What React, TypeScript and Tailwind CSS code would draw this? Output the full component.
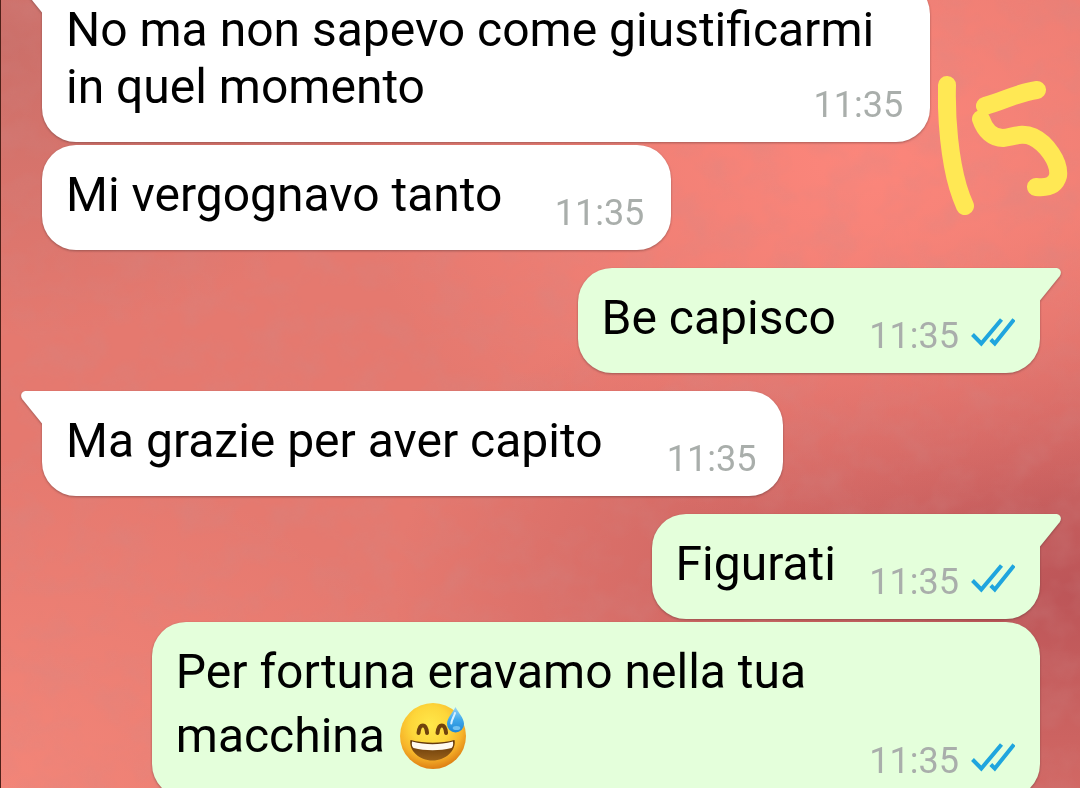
import type { ReactNode } from "react";

type Message = {
  id: number;
  mine: boolean;
  tail: boolean;
  time: string;
  text: ReactNode;
};

const messages: Message[] = [
  { id: 1, mine: false, tail: true, time: "11:35", text: "No ma non sapevo come giustificarmi in quel momento" },
  { id: 2, mine: false, tail: false, time: "11:35", text: "Mi vergognavo tanto" },
  { id: 3, mine: true, tail: true, time: "11:35", text: "Be capisco" },
  { id: 4, mine: false, tail: true, time: "11:35", text: "Ma grazie per aver capito " },
  { id: 5, mine: true, tail: true, time: "11:35", text: "Figurati" },
  {
    id: 6,
    mine: true,
    tail: false,
    time: "11:35",
    text: (
      <>
        Per fortuna eravamo nella tua macchina <SweatSmile />
      </>
    ),
  },
];

function SweatSmile() {
  return (
    <svg
      role="img"
      aria-label="grinning face with sweat"
      viewBox="0 0 71 71"
      className="inline-block h-[71px] w-[71px] align-[-19px]"
    >
      <defs>
        <radialGradient id="face" cx="0.46" cy="0.34" r="0.66">
          <stop offset="0" stopColor="#ffe84a" />
          <stop offset="0.45" stopColor="#fdd63a" />
          <stop offset="0.75" stopColor="#f7b42a" />
          <stop offset="1" stopColor="#de7f14" />
        </radialGradient>
        <linearGradient id="mouth" x1="0" y1="0" x2="0" y2="1">
          <stop offset="0" stopColor="#5c3208" />
          <stop offset="1" stopColor="#9a6119" />
        </linearGradient>
        <linearGradient id="drop" x1="0" y1="0" x2="0" y2="1">
          <stop offset="0" stopColor="#9bd4f5" />
          <stop offset="0.5" stopColor="#3fa9ea" />
          <stop offset="1" stopColor="#1d86d6" />
        </linearGradient>
      </defs>
      <circle cx="36" cy="36" r="33" fill="url(#face)" />
      <path
        d="M21.500 33c.6-5.500 2.200-7.500 4.300-7.500s3.700 2 4.300 7.500M40.500 33c.6-5.500 2.200-7.500 4.300-7.500s3.700 2 4.300 7.500"
        fill="none"
        stroke="#70430d"
        strokeWidth="4"
        strokeLinecap="round"
      />
      <path d="M13.500 40c14 3.500 31 3.500 44 0 2 10-8.500 20.500-22 20.500s-24-10.500-22-20.500z" fill="url(#mouth)" />
      <path d="M15 41.500c14 3.500 27 3.500 41 0 .6 3.500-.2 5.500-1.500 6.500-12 3-26 3-38 0-1.300-1-2.100-3-1.500-6.500z" fill="#fffaf0" />
      <path d="M58.500 7c3 6 8.500 11 8.500 17a8.500 8.500 0 0 1-17 0c0-6 5.500-11 8.500-17z" fill="url(#drop)" />
      <path d="M58 13c-1 4-3.500 6.500-3.700 10.500" fill="none" stroke="#d9f1ff" strokeWidth="2" strokeLinecap="round" />
      <ellipse cx="59.500" cy="28" rx="3.800" ry="2" fill="#8fd6fa" opacity="0.700" />
    </svg>
  );
}

function ReadTicks() {
  return (
    <svg
      role="img"
      aria-label="read"
      viewBox="0 0 44 36"
      className="h-9 w-11"
      fill="none"
      stroke="#1fa5de"
      strokeWidth="4"
    >
      <path d="M1.500 16.500l8.800 9L30.500 1.500" />
      <path d="M19.800 21.500l4 4L43 1.500" />
    </svg>
  );
}

function Tail({ mine }: { mine: boolean }) {
  return (
    <svg
      aria-hidden="true"
      viewBox="0 0 21 33"
      className={
        mine
          ? "absolute top-0 left-full h-[33px] w-[21px] fill-[#e4ffdb]"
          : "absolute top-0 right-full h-[33px] w-[21px] -scale-x-100 fill-white"
      }
    >
      <path d="M0 0H16c4.500 0 6.300 4.800 3.600 8.200L0 32.500z" />
    </svg>
  );
}

function Bubble({ message }: { message: Message }) {
  const { mine, tail, time, text } = message;
  const side = mine ? "self-end bg-[#e4ffdb] pr-[25px]" : "self-start bg-white pr-[27px]";
  const corner = tail ? (mine ? "rounded-tr-none" : "rounded-tl-none") : "";
  // a tail starts a new group, so it gets the wider gap
  const gap = tail ? "mt-[18px]" : "mt-[3px]";

  return (
    <li
      className={`relative max-w-[89%] rounded-[34px] pt-[21px] pb-4 pl-6 drop-shadow-[0_1px_1px_rgba(90,50,50,0.5)] ${side} ${corner} ${gap}`}
    >
      {tail && <Tail mine={mine} />}
      <p className="text-[48px] leading-[57px] whitespace-pre-wrap text-black">
        {text}
        {/* keeps the last line clear of the time */}
        <span className={mine ? "inline-block w-[179px]" : "inline-block w-[142px]"} />
      </p>
      <div className="-mt-[31px] flex items-center justify-end gap-3 text-[36px] leading-[42px] text-[#a9aeab]">
        <time>{time}</time>
        {mine && <ReadTicks />}
      </div>
    </li>
  );
}

function Wallpaper() {
  return (
    <svg aria-hidden="true" className="absolute inset-0 h-full w-full">
      <filter id="mottle" x="0" y="0" width="100%" height="100%">
        <feTurbulence type="fractalNoise" baseFrequency="0.028 0.032" numOctaves="3" seed="8" />
        <feColorMatrix values="0 0 0 0 0.6  0 0 0 0 0.25  0 0 0 0 0.25  1.600 0 0 0 -0.600" />
      </filter>
      <rect width="100%" height="100%" filter="url(#mottle)" opacity="0.300" />
    </svg>
  );
}

function Scribble() {
  return (
    <svg
      role="img"
      aria-label="15"
      viewBox="0 0 130 140"
      className="absolute top-[75px] right-[12px] h-[140px] w-[130px]"
      fill="none"
      stroke="#ffe854"
      strokeWidth="18"
      strokeLinecap="round"
      strokeLinejoin="round"
    >
      <path d="M9 10C8 45 12 85 20 112Q23 122 27 131" />
      <path d="M99 15C81 17 66 26 47 31M43 44C47 56 55 63 65 63C75 62 84 57 95 62C108 68 122 87 120 101C117 112 108 113 98 112" />
    </svg>
  );
}

export default function App() {
  return (
    <main className="relative h-screen overflow-hidden border-l border-[#4f2018] bg-[#e5796f] bg-[radial-gradient(ellipse_at_80%_20%,#fc867b_0%,transparent_42%),radial-gradient(ellipse_at_100%_75%,#bc5558_0%,transparent_45%),radial-gradient(ellipse_at_0%_100%,#f38578_0%,transparent_30%),radial-gradient(ellipse_at_0%_5%,#cb6f69_0%,transparent_28%)] font-[Roboto,sans-serif]">
      <Wallpaper />
      <ul className="relative -mt-[38px] flex flex-col pr-10 pl-[41px]">
        {messages.map((message) => (
          <Bubble key={message.id} message={message} />
        ))}
      </ul>
      <Scribble />
    </main>
  );
}
